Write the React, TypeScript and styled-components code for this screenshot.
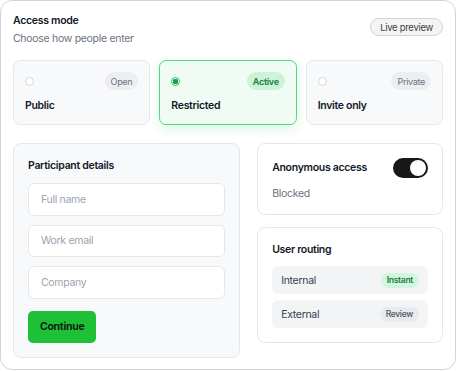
import React from 'react';
import styled, { createGlobalStyle, css } from 'styled-components';

const GlobalStyle = createGlobalStyle`
  html, body {
    margin: 0;
    padding: 0;
    background: #ffffff;
  }
  body {
    font-family: Inter, "Noto Sans", "Liberation Sans", sans-serif;
    letter-spacing: -0.3px;
    color: #111827;
    -webkit-font-smoothing: antialiased;
  }
  * {
    box-sizing: border-box;
  }
`;

type Tone = 'neutral' | 'green';

const options = [
  { id: 'public', label: 'Public', tag: 'Open', active: false },
  { id: 'restricted', label: 'Restricted', tag: 'Active', active: true },
  { id: 'invite', label: 'Invite only', tag: 'Private', active: false },
];

const fields = ['Full name', 'Work email', 'Company'];

const routes: { name: string; tag: string; tone: Tone }[] = [
  { name: 'Internal', tag: 'Instant', tone: 'green' },
  { name: 'External', tag: 'Review', tone: 'neutral' },
];

const App = () => {
  return (
    <>
      <GlobalStyle />
      <Card>
        <Header>
          <div>
            <Title>Access mode</Title>
            <Subtitle>Choose how people enter</Subtitle>
          </div>
          <PreviewPill>Live preview</PreviewPill>
        </Header>

        <OptionGrid>
          {options.map((o) => (
            <Option key={o.id} $active={o.active}>
              <OptionTop>
                <Radio $active={o.active} />
                <Tag $tone={o.active ? 'green' : 'neutral'}>{o.tag}</Tag>
              </OptionTop>
              <OptionLabel>{o.label}</OptionLabel>
            </Option>
          ))}
        </OptionGrid>

        <Lower>
          <FormPanel>
            <PanelTitle>Participant details</PanelTitle>
            <Fields>
              {fields.map((f) => (
                <Input key={f} placeholder={f} />
              ))}
            </Fields>
            <ContinueButton>Continue</ContinueButton>
          </FormPanel>

          <SideColumn>
            <AccessCard>
              <ToggleRow>
                <PanelTitle>Anonymous access</PanelTitle>
                <Toggle>
                  <Knob />
                </Toggle>
              </ToggleRow>
              <Muted>Blocked</Muted>
            </AccessCard>

            <SideCard>
              <PanelTitle>User routing</PanelTitle>
              <RouteList>
                {routes.map((r) => (
                  <RouteRow key={r.name}>
                    <span>{r.name}</span>
                    <SmallTag $tone={r.tone}>{r.tag}</SmallTag>
                  </RouteRow>
                ))}
              </RouteList>
            </SideCard>
          </SideColumn>
        </Lower>
      </Card>
    </>
  );
};

export default App;

const Card = styled.div`
  width: 456px;
  height: 370px;
  border: 1px solid #d4d4d8;
  border-radius: 12px;
  padding: 12px;
  background: #ffffff;
`;

const Header = styled.div`
  display: flex;
  align-items: center;
  justify-content: space-between;
`;

const Title = styled.div`
  font-size: 10.5px;
  line-height: 16px;
  font-weight: 600;
  color: #111827;
`;

const Subtitle = styled.div`
  margin-top: 2px;
  font-size: 10.5px;
  line-height: 16px;
  color: #6b7280;
`;

const PreviewPill = styled.div`
  height: 18px;
  padding: 0 9px;
  display: flex;
  align-items: center;
  border: 1px solid #d4d4d8;
  border-radius: 999px;
  background: #f4f4f5;
  font-size: 9.5px;
  color: #3f3f46;
  margin-top: -6px;
`;

const OptionGrid = styled.div`
  margin-top: 13px;
  display: grid;
  grid-template-columns: repeat(3, 1fr);
  gap: 9px;
`;

const Option = styled.div<{ $active: boolean }>`
  border: 1px solid #e5e7eb;
  border-radius: 7px;
  background: #f8f9fa;
  padding: 11px 11px 10px;
  display: flex;
  flex-direction: column;
  gap: 8px;

  ${(p) =>
    p.$active &&
    css`
      border-color: #4ade80;
      background: #f0fcf3;
      box-shadow: 0 4px 12px rgba(34, 197, 94, 0.16);
    `}
`;

const OptionTop = styled.div`
  display: flex;
  align-items: center;
  justify-content: space-between;
  height: 18px;
`;

const Radio = styled.span<{ $active: boolean }>`
  width: 9px;
  height: 9px;
  border-radius: 50%;
  border: 1px solid #d4d4d8;
  background: #ffffff;

  ${(p) =>
    p.$active &&
    css`
      border-color: #22c55e;
      background: radial-gradient(circle, #16a34a 0 2.6px, #ffffff 3px);
    `}
`;

const Tag = styled.span<{ $tone: Tone }>`
  height: 18px;
  padding: 0 6px;
  display: flex;
  align-items: center;
  border-radius: 999px;
  font-size: 9px;
  background: ${(p) => (p.$tone === 'green' ? '#ccf2d9' : '#eceef1')};
  color: ${(p) => (p.$tone === 'green' ? '#15803d' : '#6b7280')};
  font-weight: ${(p) => (p.$tone === 'green' ? 600 : 400)};
`;

const OptionLabel = styled.div`
  font-size: 10.5px;
  line-height: 16px;
  font-weight: 600;
  color: #111827;
`;

const Lower = styled.div`
  margin-top: 18px;
  display: grid;
  grid-template-columns: 11fr 9fr;
  gap: 17px;
  align-items: start;
`;

const FormPanel = styled.div`
  border: 1px solid #e5e7eb;
  border-radius: 8px;
  background: #f8f9fa;
  padding: 14px;
`;

const PanelTitle = styled.div`
  font-size: 10.5px;
  line-height: 16px;
  font-weight: 600;
  color: #111827;
`;

const Fields = styled.div`
  margin-top: 9px;
  display: flex;
  flex-direction: column;
  gap: 9px;
`;

const Input = styled.input`
  height: 32.5px;
  width: 100%;
  border: 1px solid #e5e7eb;
  border-radius: 6px;
  background: #ffffff;
  padding: 0 12px;
  font-family: inherit;
  letter-spacing: inherit;
  font-size: 10.5px;
  color: #111827;
  outline: none;

  &::placeholder {
    color: #9ca3af;
  }
`;

const ContinueButton = styled.button`
  margin-top: 12px;
  height: 32px;
  padding: 0 12px;
  border: none;
  border-radius: 5px;
  background: #1ec136;
  font-family: inherit;
  letter-spacing: inherit;
  font-size: 10.5px;
  font-weight: 700;
  color: #0b2512;
`;

const SideColumn = styled.div`
  display: flex;
  flex-direction: column;
  gap: 12px;
`;

const SideCard = styled.div`
  border: 1px solid #e5e7eb;
  border-radius: 8px;
  background: #ffffff;
  padding: 14px;
`;

const AccessCard = styled(SideCard)`
  padding-bottom: 12px;
`;

const ToggleRow = styled.div`
  display: flex;
  align-items: center;
  justify-content: space-between;
`;

const Toggle = styled.span`
  width: 35px;
  height: 20px;
  border-radius: 999px;
  background: #18181b;
  padding: 2px;
  display: flex;
  justify-content: flex-end;
`;

const Knob = styled.span`
  width: 16px;
  height: 16px;
  border-radius: 50%;
  background: #ffffff;
`;

const Muted = styled.div`
  margin-top: 8px;
  font-size: 10.5px;
  line-height: 16px;
  color: #6b7280;
`;

const RouteList = styled.div`
  margin-top: 8px;
  display: flex;
  flex-direction: column;
  gap: 6px;
`;

const RouteRow = styled.div`
  height: 28px;
  border-radius: 6px;
  background: #f2f4f6;
  padding: 0 9px;
  display: flex;
  align-items: center;
  justify-content: space-between;
  font-size: 10.5px;
  color: #374151;
`;

const SmallTag = styled.span<{ $tone: Tone }>`
  height: 15px;
  padding: 0 6px;
  display: flex;
  align-items: center;
  border-radius: 999px;
  font-size: 8.5px;
  font-weight: ${(p) => (p.$tone === 'green' ? 600 : 500)};
  background: ${(p) => (p.$tone === 'green' ? '#d1f5dd' : '#e8eaee')};
  color: ${(p) => (p.$tone === 'green' ? '#15803d' : '#4b5563')};
`;
